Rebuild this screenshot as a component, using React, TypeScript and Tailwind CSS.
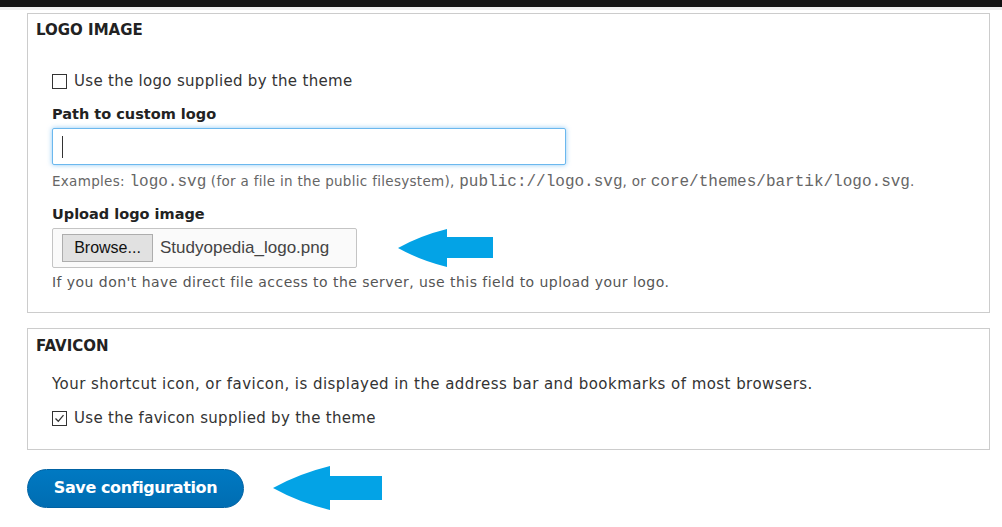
import React from 'react';

const sans = "font-['DejaVu_Sans',sans-serif]";
const mono = "font-['Liberation_Mono',monospace]";

function Arrow({ w, h, head, shaftTop, shaftBottom }: { w: number; h: number; head: number; shaftTop: number; shaftBottom: number }) {
  const mid = h / 2;
  return (
    <svg width={w} height={h} viewBox={`0 0 ${w} ${h}`}>
      <path
        d={`M0 ${mid} Q${head * 0.45} ${mid * 0.35} ${head} 0 L${head} ${shaftTop} L${w} ${shaftTop} L${w} ${shaftBottom} L${head} ${shaftBottom} L${head} ${h} Q${head * 0.45} ${h - mid * 0.35} 0 ${mid} Z`}
        fill="#03a3e6"
      />
    </svg>
  );
}

function Checkbox({ checked }: { checked?: boolean }) {
  return (
    <span className="inline-flex w-[15px] h-[15px] border border-[#333] bg-white items-center justify-center shrink-0">
      {checked && (
        <svg width="11" height="11" viewBox="0 0 11 11">
          <path d="M1.5 5.5 L4.3 8.3 L9.5 2.2" fill="none" stroke="#333" strokeWidth="1.3" />
        </svg>
      )}
    </span>
  );
}

export default function App() {
  return (
    <div className={`w-[1002px] h-[527px] bg-white overflow-hidden ${sans} text-[#333]`}>
      <div className="h-[7px] bg-[#111]" />
      <div className="h-[3px] bg-[#ececec]" />

      <div className="ml-[27px] mr-[12px] mt-[3px]">
        {/* logo image */}
        <fieldset className="border border-[#cccccc] pt-[7px] pb-[21px]">
          <div className="pl-[8px] text-[15px] leading-[18px] font-bold text-[#222]">LOGO IMAGE</div>
          <div className="pl-[24px]">
            <label className="mt-[32px] flex items-center gap-[7px] text-[15px] leading-[20px] tracking-[0.3px]">
              <Checkbox />
              <span>Use the logo supplied by the theme</span>
            </label>

            <div className="mt-[14px] text-[14.5px] leading-[18px] font-bold text-[#222]">Path to custom logo</div>
            <div className="mt-[5px] w-[514px] h-[37px] rounded-[2px] border border-[#6bb8ee] shadow-[0_0_5px_rgba(80,170,240,0.65)] bg-white flex items-center pl-[9px]">
              <span className="w-[1px] h-[22px] bg-[#333]" />
            </div>
            <div className="mt-[7px] h-[18px] text-[13.5px] leading-[18px] text-[#666] tracking-[0.3px] whitespace-nowrap">
              Examples: <span className={`${mono} text-[16px] tracking-[0px]`}>logo.svg</span> (for a file in the public filesystem),{' '}
              <span className={`${mono} text-[16px] tracking-[0px]`}>public://logo.svg</span>, or{' '}
              <span className={`${mono} text-[16px] tracking-[0px]`}>core/themes/bartik/logo.svg</span>.
            </div>

            <div className="mt-[15px] text-[14.5px] leading-[18px] font-bold text-[#222]">Upload logo image</div>
            <div className="mt-[5px] flex items-center">
              <div className="w-[305px] h-[40px] border border-[#c4c4c4] rounded-[2px] bg-[#fafafa] flex items-center pl-[9px] gap-[7px] font-['Liberation_Sans',sans-serif]">
                <span className="w-[91px] h-[28px] border border-[#adadad] bg-[#e1e1e1] flex items-center justify-center text-[16px] text-[#111]">
                  Browse...
                </span>
                <span className="text-[17px] text-[#444]">Studyopedia_logo.png</span>
              </div>
              <div className="ml-[41px]">
                <Arrow w={95} h={38} head={49} shaftTop={8} shaftBottom={29} />
              </div>
            </div>
            <div className="mt-[5px] text-[14px] leading-[18px] text-[#555] tracking-[0.45px]">
              If you don't have direct file access to the server, use this field to upload your logo.
            </div>
          </div>
        </fieldset>

        {/* favicon */}
        <fieldset className="mt-[15px] border border-[#cccccc] pt-[8px] pb-[21px]">
          <div className="pl-[8px] text-[15px] leading-[18px] font-bold text-[#222]">FAVICON</div>
          <div className="pl-[24px]">
            <p className="mt-[19px] text-[15px] leading-[20px] tracking-[0.45px]">
              Your shortcut icon, or favicon, is displayed in the address bar and bookmarks of most browsers.
            </p>
            <label className="mt-[14px] flex items-center gap-[7px] text-[15px] leading-[20px] tracking-[0.3px]">
              <Checkbox checked />
              <span>Use the favicon supplied by the theme</span>
            </label>
          </div>
        </fieldset>

        <div className="mt-[16px] flex items-center">
          <button className="w-[217px] h-[39px] rounded-full bg-gradient-to-b from-[#0079c2] to-[#006db2] border border-[#0062a3] text-white font-bold text-[16px] tracking-[-0.4px]">
            Save configuration
          </button>
          <div className="ml-[29px]">
            <Arrow w={109} h={44} head={57} shaftTop={10} shaftBottom={34} />
          </div>
        </div>
      </div>
    </div>
  );
}
